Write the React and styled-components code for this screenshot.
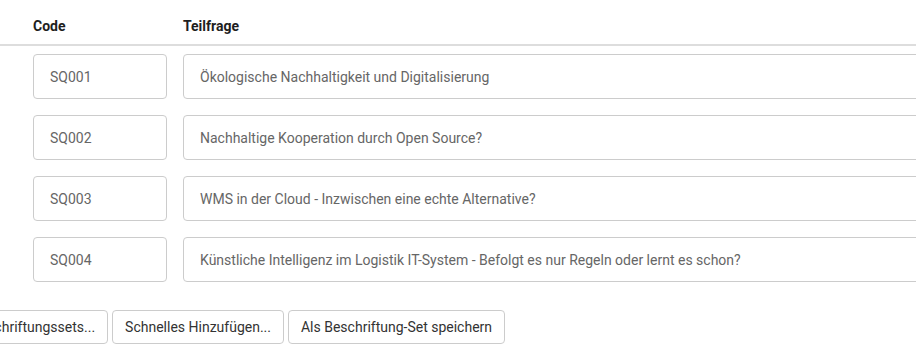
import styled, { createGlobalStyle } from 'styled-components'

const GlobalStyle = createGlobalStyle`
body {
  margin:0;
  background:#fff;
  font-family:Roboto, "Liberation Sans", sans-serif;
  overflow:hidden;
}
`

const Page = styled.div`
width:1100px;
`

const HeaderRow = styled.div`
display:grid;
grid-template-columns:134px 1fr;
column-gap:16px;
padding:16px 0 8px 33px;
border-bottom:2px solid #dddddd;
`

const HeaderCell = styled.div`
font-size:14px;
line-height:20px;
font-weight:700;
color:#1e1e1e;
`

const Row = styled.div`
display:grid;
grid-template-columns:134px 1fr;
column-gap:16px;
padding:8px 0 8px 33px;
`

const Field = styled.div`
height:45px;
box-sizing:border-box;
border:1px solid #cccccc;
border-radius:4px;
display:flex;
align-items:center;
padding:0 16px;
font-size:14px;
color:#666666;
white-space:nowrap;
overflow:hidden;
`

const Toolbar = styled.div`
display:flex;
gap:4px;
margin:20px 0 0 -42px;
`

const Button = styled.button`
height:34px;
padding:0 12px;
background:#fff;
border:1px solid #cccccc;
border-radius:4px;
font-family:Roboto, "Liberation Sans", sans-serif;
font-size:14px;
color:#333333;
white-space:nowrap;
`

const rows = [
  ['SQ001', 'Ökologische Nachhaltigkeit und Digitalisierung'],
  ['SQ002', 'Nachhaltige Kooperation durch Open Source?'],
  ['SQ003', 'WMS in der Cloud - Inzwischen eine echte Alternative?'],
  ['SQ004', 'Künstliche Intelligenz im Logistik IT-System - Befolgt es nur Regeln oder lernt es schon?'],
]

const App = () => {
  return (
    <Page>
      <GlobalStyle />
      <HeaderRow>
        <HeaderCell>Code</HeaderCell>
        <HeaderCell>Teilfrage</HeaderCell>
      </HeaderRow>
      {rows.map(([code, text]) => (
        <Row key={code}>
          <Field>{code}</Field>
          <Field>{text}</Field>
        </Row>
      ))}
      <Toolbar>
        <Button>Beschriftungssets...</Button>
        <Button>Schnelles Hinzufügen...</Button>
        <Button>Als Beschriftung-Set speichern</Button>
      </Toolbar>
    </Page>
  )
}

export default App
